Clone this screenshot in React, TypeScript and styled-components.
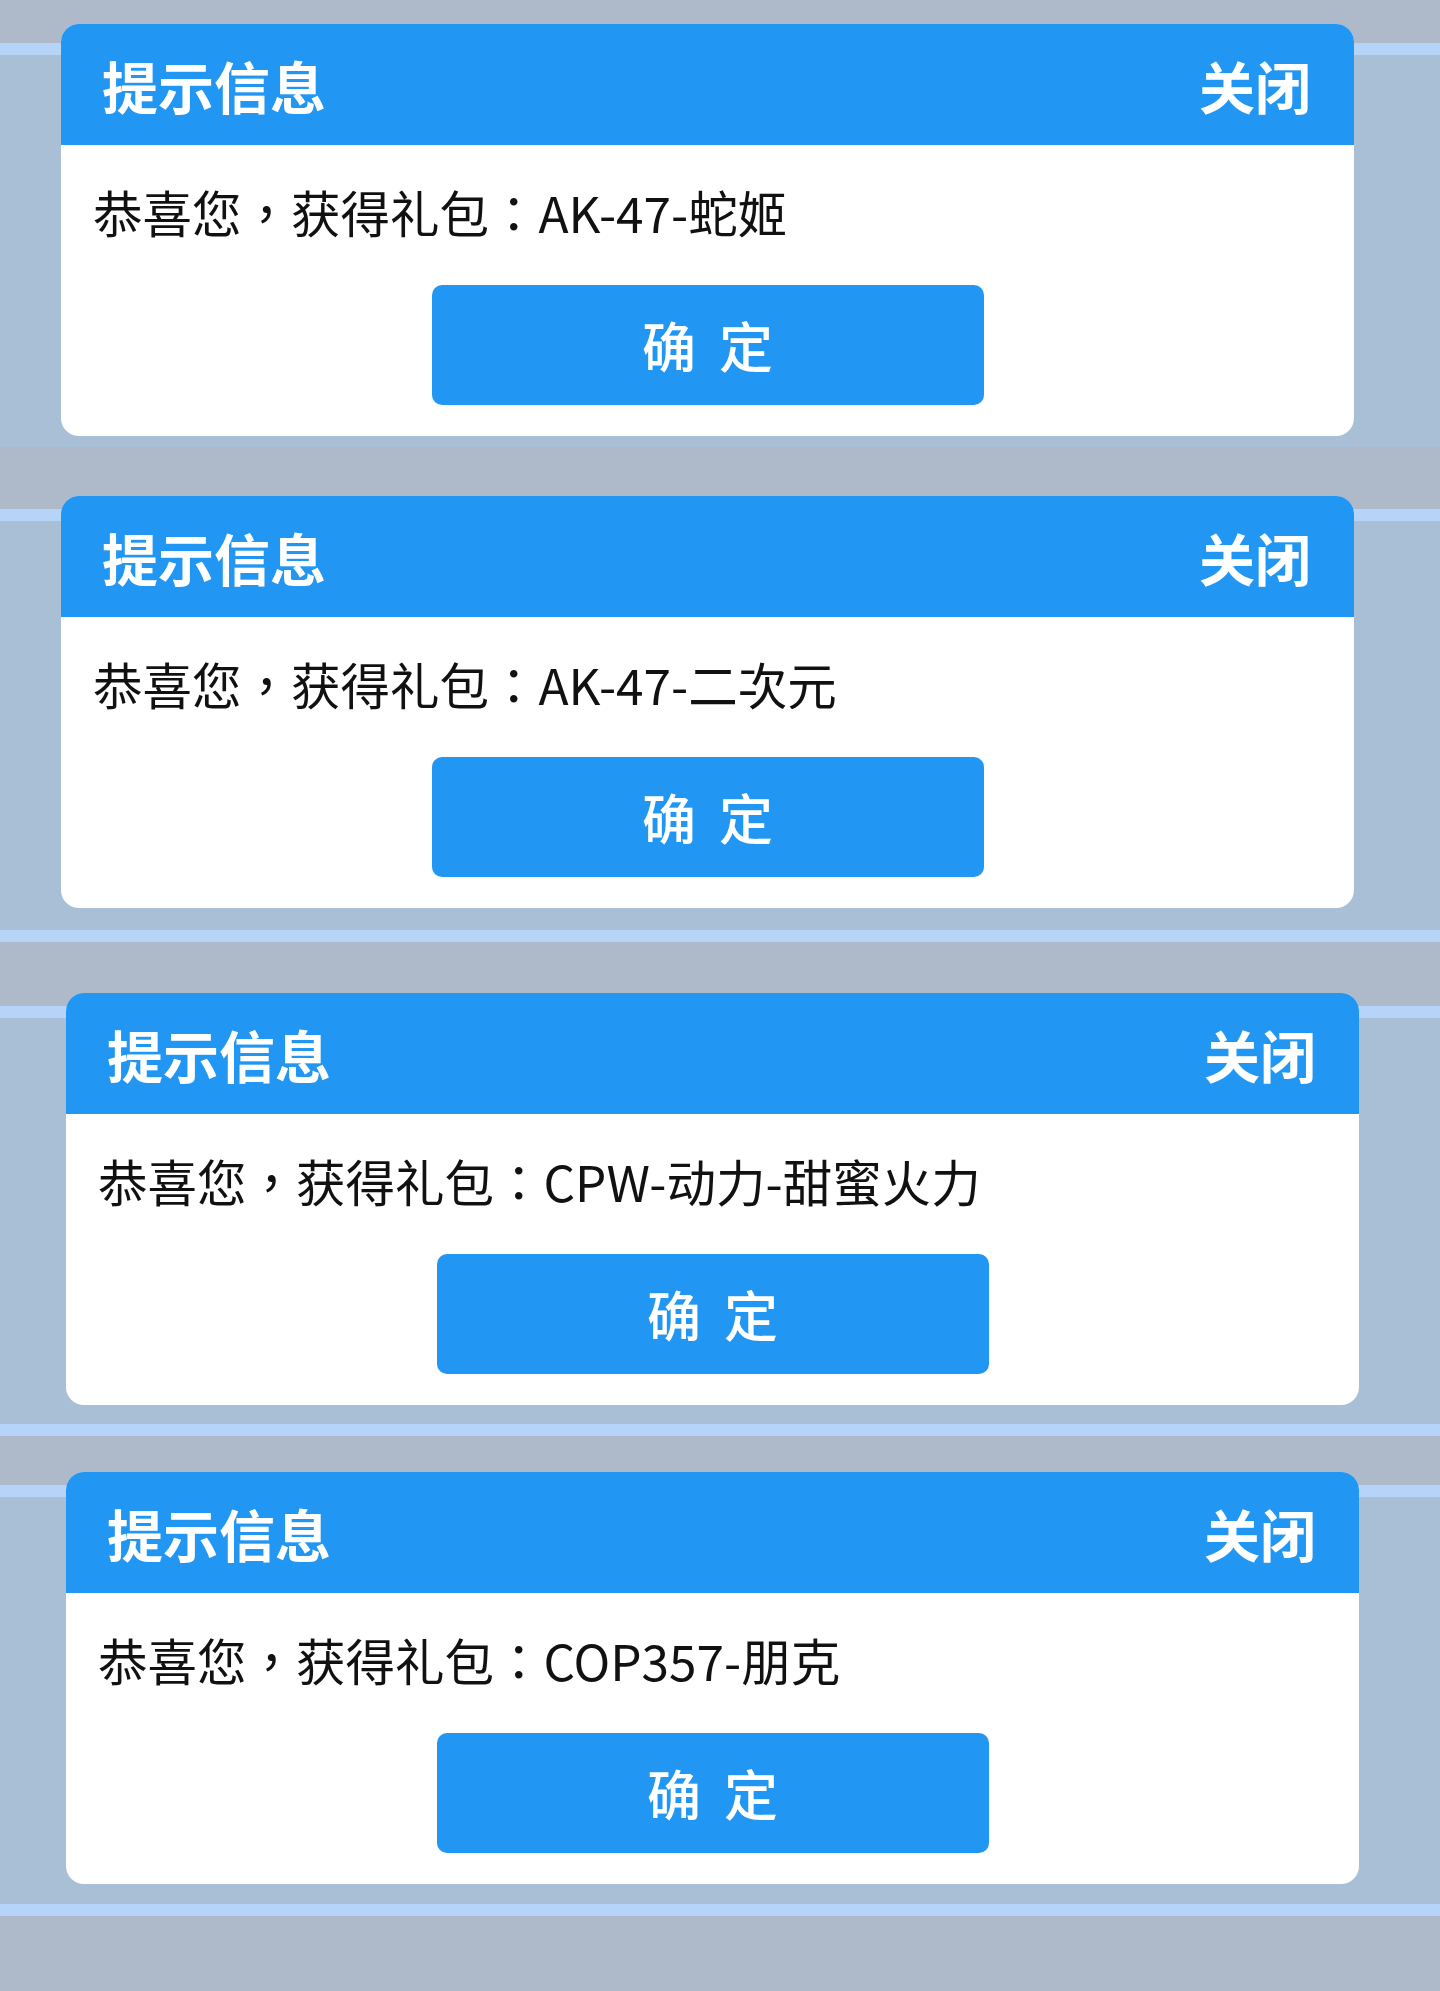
import styled, { createGlobalStyle } from "styled-components"

const GRAY = "#aeb9c9"
const SLATE = "#a9bfd6"
const RAIL = "#b6d3f8"
const BLUE = "#2196f3"

const GlobalStyle = createGlobalStyle`
  html, body {
    margin: 0;
    padding: 0;
    background: ${GRAY};
  }
  body {
    font-family: "Noto Sans CJK SC", "Noto Sans", sans-serif;
  }
`

const Page = styled.div`
  display: flex;
  flex-direction: column;
  width: 1440px;
`

// one captured screen: grey status band, a thin light rail, then the slate backdrop
const Shot = styled.section<{ $band: number; $top: number; $left: number; $bottom: number; $rail?: boolean }>`
  box-sizing: border-box;
  display: flex;
  flex-direction: column;
  padding: ${(p) => p.$top}px 0 ${(p) => p.$bottom}px ${(p) => p.$left}px;
  background: linear-gradient(
    to bottom,
    ${GRAY} 0 ${(p) => p.$band}px,
    ${RAIL} ${(p) => p.$band}px ${(p) => p.$band + 12}px,
    ${SLATE} ${(p) => p.$band + 12}px
  );
  border-bottom: ${(p) => (p.$rail ? `12px solid ${RAIL}` : "none")};
`

const Tail = styled.div`
  height: 74px;
  background: ${GRAY};
`

const Dialog = styled.div`
  width: 1293px;
  height: 412px;
  display: flex;
  flex-direction: column;
  background: #fff;
  border-radius: 18px;
  overflow: hidden;
`

const Header = styled.div`
  height: 121px;
  flex-shrink: 0;
  display: flex;
  align-items: center;
  justify-content: space-between;
  padding: 0 43px 0 41px;
  background: ${BLUE};
  color: #fff;
  font-size: 56px;
  font-weight: 700;
  line-height: 1;
`

const Close = styled.span`
  cursor: pointer;
`

const Body = styled.div`
  display: flex;
  flex-direction: column;
  padding: 42px 32px 31px;
`

// centred full-width punctuation
const Message = styled.p`
  margin: 0;
  font-family: "Noto Sans CJK TC", "Noto Sans CJK SC", sans-serif;
  font-size: 49.5px;
  line-height: 1;
  color: #111;
  white-space: nowrap;
`

const Confirm = styled.button`
  align-self: center;
  width: 552px;
  height: 120px;
  margin-top: 48px;
  border: none;
  border-radius: 10px;
  background: ${BLUE};
  color: #fff;
  font-family: inherit;
  font-size: 54px;
  font-weight: 500;
  word-spacing: 11px;
  line-height: 1;
  cursor: pointer;
`

const shots = [
  { band: 43, top: 24, left: 61, bottom: 11, rail: false, prize: "AK-47-蛇姬" },
  { band: 62, top: 49, left: 61, bottom: 22, rail: true, prize: "AK-47-二次元" },
  { band: 64, top: 51, left: 66, bottom: 19, rail: true, prize: "CPW-动力-甜蜜火力" },
  { band: 49, top: 36, left: 66, bottom: 20, rail: true, prize: "COP357-朋克" },
]

export default function App() {
  return (
    <>
      <GlobalStyle />
      <Page>
        {shots.map((s) => (
          <Shot key={s.prize} $band={s.band} $top={s.top} $left={s.left} $bottom={s.bottom} $rail={s.rail}>
            <Dialog>
              <Header>
                <span>提示信息</span>
                <Close>关闭</Close>
              </Header>
              <Body>
                <Message>恭喜您，获得礼包：{s.prize}</Message>
                <Confirm>确 定</Confirm>
              </Body>
            </Dialog>
          </Shot>
        ))}
        <Tail />
      </Page>
    </>
  )
}
